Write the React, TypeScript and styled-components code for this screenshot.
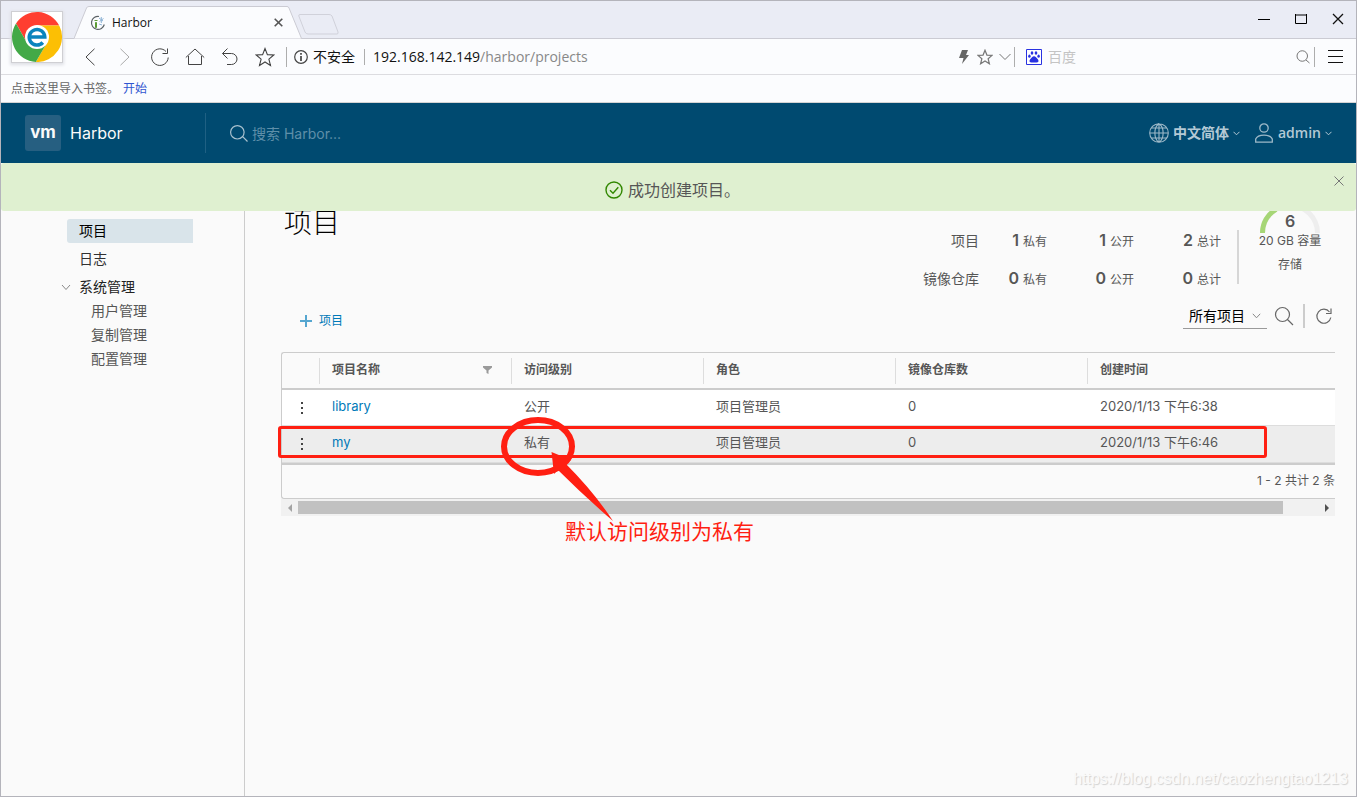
import React from "react";
import styled, { createGlobalStyle } from "styled-components";

const ui = `"Open Sans", "Noto Sans CJK SC", sans-serif`;
const app = `Inter, "Noto Sans CJK SC", sans-serif`;

const GlobalStyle = createGlobalStyle`
  *, *::before, *::after { box-sizing: border-box; }
  body { margin: 0; background: #fafafa; color: #565656; font-family: ${app}; }
  button, input, select { font: inherit; color: inherit; margin: 0; padding: 0; border: 0; background: none; outline: none; }
  button { cursor: pointer; }
  a { text-decoration: none; }
`;

/* ---------- browser frame ---------- */

const Window = styled.div`
  position: relative;
  display: flex;
  flex-direction: column;
  min-height: 100vh;
  border: 1px solid #b4b4bb;
  overflow: hidden;
`;

const TitleBar = styled.div`
  display: flex;
  align-items: flex-end;
  height: 38px;
  padding-left: 73px;
  background: #eaecf5;
  border-bottom: 1px solid #cbcbd3;
  font-family: ${ui};
`;

const BrowserLogo = styled.button`
  position: absolute;
  top: 10px;
  left: 10px;
  z-index: 2;
  background: #fff;
  && { border: 1px solid #cfcfd3; }
  box-shadow: 0 1px 3px 1px #dfe0e6;
  svg { display: block; }
`;

const Tab = styled.div`
  position: relative;
  display: flex;
  align-items: center;
  gap: 6px;
  width: 228px;
  height: 33px;
  margin-bottom: -1px;
  padding: 0 19px 0 16px;
  color: #111;
  font-size: 12px;
`;

const TabShape = styled.svg`
  position: absolute;
  inset: 0;
`;

const Favicon = styled.svg`
  position: relative;
`;

const TabTitle = styled.span`
  position: relative;
  flex: 1;
  line-height: 16px;
`;

const TabClose = styled.button`
  position: relative;
  display: flex;
`;

const NewTab = styled.button`
  display: flex;
  align-self: center;
  margin: 10px 0 0 -4px;
`;

const WindowButtons = styled.div`
  display: flex;
  align-self: stretch;
  margin-left: auto;
`;

const WindowButton = styled.button`
  display: flex;
  align-items: center;
  justify-content: center;
  width: 37px;
  height: 36px;
`;

const NavBar = styled.div`
  display: flex;
  align-items: center;
  height: 36px;
  padding-left: 71px;
  background: #fbfcfe;
  border-bottom: 1px solid #dcdce0;
  font-family: ${ui};
  font-size: 14px;
  line-height: 20px;
`;

const NavButton = styled.button<{ $w?: number }>`
  display: flex;
  flex: none;
  align-items: center;
  justify-content: center;
  width: ${(p) => p.$w ?? 35}px;
  height: 30px;
`;

const BarLine = styled.span<{ $h?: number }>`
  flex: none;
  width: 1px;
  height: ${(p) => p.$h ?? 20}px;
  background: #adadad;
`;

const Security = styled.div`
  display: flex;
  align-items: center;
  gap: 5px;
  margin-left: 4px;
  padding: 0 9px 0 7px;
  border-left: 1px solid #adadad;
  color: #111;
`;

const Address = styled.div`
  flex: 1;
  padding-left: 8px;
  color: #888;
  b { font-weight: 400; color: #111; }
`;

const WebSearch = styled.form`
  display: flex;
  align-items: center;
  width: 299px;
  gap: 6px;
  padding-left: 11px;
  input { flex: 1; min-width: 0; height: 20px; }
  input::placeholder { color: #c4c4c4; opacity: 1; }
`;

const Bookmarks = styled.div`
  display: flex;
  align-items: center;
  gap: 4px;
  height: 28px;
  padding: 0 10px 2px;
  background: #fbfcfe;
  border-bottom: 1px solid #d4d4d4;
  color: #666;
  font-family: ${ui};
  font-size: 12px;
  a { color: #2f55d0; }
`;

/* ---------- application header ---------- */

const Header = styled.header`
  display: flex;
  align-items: center;
  height: 60px;
  padding: 0 24px;
  background: #004a70;
  color: #fafafa;
`;

const Brand = styled.a`
  display: flex;
  align-items: center;
  gap: 9px;
  width: 180px;
  color: #fafafa;
  font-size: 16px;
  line-height: 24px;
`;

const BrandMark = styled.span`
  display: flex;
  align-items: center;
  justify-content: center;
  width: 36px;
  height: 36px;
  padding-bottom: 2px;
  border-radius: 3px;
  background: #265f81;
  font-weight: 700;
  font-size: 17px;
`;

const GlobalSearch = styled.label`
  display: flex;
  flex: 1;
  align-items: center;
  gap: 4px;
  height: 40px;
  padding-left: 24px;
  border-left: 1px solid #1f6083;
  font-size: 14px;
  input { flex: 1; min-width: 0; height: 20px; }
  input::placeholder { color: #5f8fa9; opacity: 1; }
`;

const HeaderMenu = styled.button`
  display: flex;
  align-items: center;
  gap: 4px;
  margin-left: 14px;
  color: #b3c9d5;
  && { font-family: ${ui}; font-size: 14px; font-weight: 600; line-height: 20px; }
`;

/* ---------- page ---------- */

const Page = styled.div`
  position: relative;
  display: flex;
  flex: 1;
`;

const Alert = styled.div`
  position: absolute;
  inset: 0 0 auto 0;
  z-index: 1;
  display: flex;
  align-items: center;
  justify-content: center;
  gap: 5px;
  height: 48px;
  padding: 5px 12px 0 0;
  border-radius: 3px;
  background: #dff0d0;
  color: #565656;
  font-size: 16px;
  line-height: 24px;
`;

const AlertClose = styled.button`
  position: absolute;
  top: 13px;
  right: 12px;
  display: flex;
`;

const Sidebar = styled.nav`
  width: 244px;
  flex: none;
  padding: 56px 51px 0 60px;
  border-right: 1px solid #ccc;
  font-size: 14px;
  line-height: 24px;
`;

const SideLink = styled.a<{ $active?: boolean }>`
  display: block;
  margin: 0 0 4px 6px;
  padding-left: 12px;
  border-radius: 3px 0 0 3px;
  background: ${(p) => (p.$active ? "#d9e4ea" : "none")};
  color: ${(p) => (p.$active ? "#000" : "#313131")};
`;

const SideGroup = styled.button`
  display: flex;
  align-items: center;
  gap: 8px;
  height: 24px;
  color: #222;
`;

const SideChild = styled.a`
  display: block;
  padding-left: 30px;
  color: #565656;
`;

const Main = styled.main`
  flex: 1;
  min-width: 0;
  padding: 40px 21px 24px 36px;
`;

const Top = styled.div`
  display: flex;
  justify-content: space-between;
  height: 95px;
`;

const Title = styled.h1`
  margin: 0;
  padding: 2px 0 0 3px;
  color: #000;
  font-weight: 300;
  font-size: 28px;
  line-height: 36px;
`;

const Summary = styled.div`
  display: flex;
  align-items: flex-end;
`;

const Stats = styled.table`
  border-collapse: collapse;
  margin-right: 16px;
  th, td { height: 38px; padding: 0; text-align: right; vertical-align: middle; line-height: 24px; }
  th { font-weight: 400; font-size: 14px; }
  td { width: 87px; font-size: 12px; }
  td:nth-child(2) { width: 68px; }
  b { margin-right: 4px; font-size: 16px; font-weight: 600; }
`;

const StatsLine = styled.span`
  width: 2px;
  height: 54px;
  margin-bottom: 14px;
  background: #d6d6d6;
`;

const Storage = styled.div`
  display: flex;
  flex-direction: column;
  align-items: center;
  align-self: flex-start;
  width: 102px;
  margin-right: -6px;
  font-size: 12px;
  line-height: 24px;
`;

const Gauge = styled.div`
  display: grid;
  height: 26px;
  justify-items: center;
  align-items: end;
  svg, b { grid-area: 1 / 1; }
  b { padding-bottom: 4px; font-size: 16px; font-weight: 600; line-height: 16px; }
  svg { display: block; }
`;

const Actions = styled.div`
  display: flex;
  align-items: center;
  height: 36px;
  padding-right: 2px;
`;

const AddButton = styled.button`
  display: flex;
  align-items: center;
  gap: 7px;
  && { margin: 9px auto 0 19px; color: #0079b8; font-size: 12px; line-height: 20px; }
`;

const FilterBox = styled.div`
  display: grid;
  align-items: center;
  width: 84px;
  border-bottom: 1px solid #9a9a9a;
  color: #000;
  font-size: 14px;
  select, svg { grid-area: 1 / 1; }
  select { appearance: none; height: 24px; padding-left: 6px; }
  svg { justify-self: end; margin-right: 6px; pointer-events: none; }
`;

const IconButton = styled.button`
  display: flex;
  && { margin-left: 7px; }
`;

const ActionLine = styled.span`
  width: 2px;
  height: 24px;
  margin: 0 3px 0 9px;
  background: #ccc;
`;

const GridWrap = styled.div`
  position: relative;
  margin-top: 18px;
`;

const Grid = styled.div`
  border: 1px solid #ccc;
  border-right: 0;
  border-radius: 3px 0 0 3px;
`;

const DataTable = styled.table`
  width: 100%;
  table-layout: fixed;
  border-collapse: separate;
  border-spacing: 0;
  th, td { text-align: left; padding: 0; }
  th { height: 37px; border-bottom: 2px solid #ccc; font-size: 12px; font-weight: 600; line-height: 24px; }
  td { height: 36px; padding: 0 0 4px 13px; font-size: 13px; line-height: 24px; background: #fff; border-bottom: 1px solid #ddd; }
  tr.hovered td { height: 37px; background: #ededed; }
  td:first-child { padding: 0 0 0 18px; }
  a { color: #0079b8; }
`;

const HeadCell = styled.div`
  display: flex;
  align-items: center;
  justify-content: space-between;
  height: 26px;
  margin-top: 1px;
  padding: 0 19px 2px 12px;
  border-left: 1px solid #ddd;
`;

const RowMenu = styled.button`
  display: flex;
`;

const GridFooter = styled.div`
  height: 35px;
  border-top: 2px solid #ccc;
  text-align: right;
  font-size: 12px;
  line-height: 32px;
`;

const ScrollTrack = styled.div`
  display: flex;
  align-items: center;
  height: 17px;
  background: #f1f1f1;
`;

const ScrollArrow = styled.button`
  display: flex;
  align-items: center;
  justify-content: center;
  width: 17px;
  height: 17px;
`;

const ScrollRail = styled.div`
  flex: 1;
  padding-right: 35px;
`;

const ScrollThumb = styled.div`
  height: 13px;
  background: #c1c1c1;
`;

/* ---------- hand-drawn marks over the grid ---------- */

const MarkBox = styled.div`
  position: absolute;
  top: 74px;
  left: -3px;
  right: 68px;
  height: 32px;
  border: 3px solid #ff1f12;
  border-radius: 3px;
  pointer-events: none;
`;

const MarkArrow = styled.svg`
  position: absolute;
  top: 64px;
  left: 219px;
  pointer-events: none;
`;

const MarkNote = styled.p`
  position: absolute;
  top: 166px;
  left: 284px;
  margin: 0;
  color: #ff1f12;
  font-size: 21px;
  line-height: 28px;
  white-space: nowrap;
`;

const Watermark = styled.div`
  position: absolute;
  right: 8px;
  bottom: 7px;
  color: #fafafa;
  font-family: "Liberation Sans", Arial, sans-serif;
  font-size: 16px;
  line-height: 20px;
  text-shadow: 1px 1px 1px #d0d0d0;
`;

type IconProps = { w: number; h?: number; color?: string; sw?: number; d: string; fill?: string };
const Icon = ({ w, h = w, color = "#444", sw = 1, d, fill = "none" }: IconProps) => (
  <svg width={w} height={h} viewBox={`0 0 ${w} ${h}`} fill={fill} stroke={color} strokeWidth={sw} aria-hidden="true">
    <path d={d} />
  </svg>
);

const star = "M10 1.500L12.400 7.600L18.800 8L13.900 12.200L15.500 18.500L10 15L4.500 18.500L6.100 12.200L1.200 8L7.600 7.600z";

const projects = [
  { name: "library", access: "公开", role: "项目管理员", repos: 0, created: "2020/1/13 下午6:38" },
  { name: "my", access: "私有", role: "项目管理员", repos: 0, created: "2020/1/13 下午6:46", hovered: true },
];

const stats = [
  { label: "项目", values: [1, 1, 2] },
  { label: "镜像仓库", values: [0, 0, 0] },
];
const statNames = ["私有", "公开", "总计"];

export default function App() {
  return (
    <Window>
      <GlobalStyle />
      <BrowserLogo aria-label="浏览器">
        <svg width="50" height="50" viewBox="-25 -25 50 50">
          <path fill="#ff3e30" d="M-21-13.500A25 25 0 0 1 22.200-11.500H0L-10 5.800z" />
          <path fill="#fcbf04" d="M22.200-11.500A25 25 0 0 1-1.200 25L10 5.800 0-11.500z" />
          <path fill="#43a947" d="M-1.200 25A25 25 0 0 1-21-13.500L-10 5.800H10z" />
          <circle r="12" fill="#fff" />
          <path fill="none" stroke="#0a84bd" strokeWidth="3.500" d="M-7.500 0H7.800A7.800 7.800 0 1 0 5.800 5.500" />
        </svg>
      </BrowserLogo>

      <TitleBar>
        <Tab>
          <TabShape width="228" height="33" viewBox="0 0 228 33">
            <path d="M0 32.500L12.500 2Q13 .5 15 .5H213Q214.500.5 215 2L227.500 32.500" fill="#fbfcfe" stroke="#cbcbd3" />
          </TabShape>
          <Favicon width="16" height="16" viewBox="0 0 16 16" fill="none">
            <path d="M9 1.500A6.500 6.500 0 1 0 14.300 9.500" stroke="#5d6468" strokeWidth="1.200" />
            <path d="M5.500 12.500V7.500h1v5zM4.500 5.500h3" stroke="#5b9a35" fill="#5b9a35" />
            <path d="M9 3l4 3M9.500 6.500l4-3M11.300 2v6M9 9l3 1" stroke="#8fb4d6" />
          </Favicon>
          <TabTitle>Harbor</TabTitle>
          <TabClose aria-label="关闭标签">
            <Icon w={9} color="#555" sw={1.6} d="M.7.7l7.600 7.600M8.300.7L.7 8.300" />
          </TabClose>
        </Tab>
        <NewTab aria-label="新标签">
          <Icon w={41} h={21} color="#d0d1da" d="M2 .5H31Q33 .5 34 2L40 18Q40.500 20 39 20H10Q8 20 7 18L.8 2Q.5.500 2 .5z" />
        </NewTab>
        <WindowButtons>
          <WindowButton aria-label="最小化"><Icon w={12} color="#000" d="M0 6.500H12" /></WindowButton>
          <WindowButton aria-label="最大化"><Icon w={12} h={10} color="#000" d="M.5 0V9.500H11.500V0M0 1H12" /></WindowButton>
          <WindowButton aria-label="关闭"><Icon w={12} color="#111" sw={1.300} d="M1 1l10 10M11 1L1 11" /></WindowButton>
        </WindowButtons>
      </TitleBar>

      <NavBar>
        <NavButton aria-label="后退"><Icon w={10} h={18} d="M9.500.8L1 9l8.500 8.200" /></NavButton>
        <NavButton aria-label="前进"><Icon w={10} h={18} color="#aaa" d="M.5.8L9 9L.5 17.200" /></NavButton>
        <NavButton aria-label="刷新"><Icon w={20} d="M18.200 10.500A8.300 8.300 0 1 1 16 4.500M17.500 1.500V6.500H12.500" /></NavButton>
        <NavButton aria-label="主页"><Icon w={20} d="M.8 10.500L10 2l9.200 8.500M3.500 9V17.500H16.500V9" /></NavButton>
        <NavButton aria-label="撤销"><Icon w={18} h={20} d="M1.500 6.500H10.500A5.500 5.500 0 0 1 10.500 17.500H6M6.500 1.500L1.500 6.500L6.500 11.500" /></NavButton>
        <NavButton aria-label="收藏"><Icon w={20} sw={1.100} d={star} /></NavButton>
        <Security>
          <svg width="14" height="14" viewBox="0 0 14 14" fill="none" stroke="#444" strokeWidth="1.200">
            <circle cx="7" cy="7" r="6.300" />
            <path d="M7 6v5M7 3v1.700" strokeWidth="1.700" />
          </svg>
          不安全
        </Security>
        <BarLine $h={16} />
        <Address><b>192.168.142.149</b>/harbor/projects</Address>
        <NavButton $w={20} aria-label="极速模式"><Icon w={10} h={14} color="none" fill="#666" d="M3 0H9L7 5H10L3 14L4.500 8H0z" /></NavButton>
        <NavButton $w={22} aria-label="收藏本页">
          <svg width="16" height="16" viewBox="0 0 20 20" fill="none" stroke="#777" strokeWidth="1.500"><path d={star} /></svg>
        </NavButton>
        <NavButton $w={18} aria-label="展开"><Icon w={12} h={8} color="#777" d="M.5 1l5.500 5.500L11.500 1" /></NavButton>
        <BarLine />
        <WebSearch onSubmit={(e) => e.preventDefault()}>
          <svg width="16" height="16" viewBox="0 0 16 16" fill="#2932e1">
            <path d="M.5.5h15v15H.5z" fill="#fff" stroke="#2932e1" />
            <ellipse cx="6" cy="4" rx="1.300" ry="1.700" />
            <ellipse cx="10" cy="4" rx="1.300" ry="1.700" />
            <ellipse cx="3.400" cy="7.200" rx="1.200" ry="1.600" />
            <ellipse cx="12.600" cy="7.200" rx="1.200" ry="1.600" />
            <path d="M8 7.300C9.500 7.300 10.500 9 12 10.500C13.300 12.500 12 13.800 10 13.500H6C4 13.800 2.700 12.500 4 10.500C5.500 9 6.500 7.300 8 7.300z" />
          </svg>
          <input aria-label="百度" placeholder="百度" />
          <NavButton $w={22} aria-label="搜索"><Icon w={14} color="#777" d="M11.500 6A5.200 5.200 0 1 1 1 6A5.200 5.200 0 0 1 11.500 6M10 10L13.500 13" /></NavButton>
        </WebSearch>
        <BarLine />
        <NavButton $w={41} aria-label="菜单"><Icon w={15} color="#111" d="M0 1.500H15M0 7.500H15M0 13.500H15" /></NavButton>
      </NavBar>

      <Bookmarks>
        <span>点击这里导入书签。</span>
        <a href="#start">开始</a>
      </Bookmarks>

      <Header>
        <Brand href="#home">
          <BrandMark>vm</BrandMark>
          Harbor
        </Brand>
        <GlobalSearch>
          <Icon w={18} color="#a9c2cf" sw={1.200} d="M14 7.500A6.700 6.700 0 1 1 .7 7.500A6.700 6.700 0 0 1 14 7.500M12.200 12.200L17.500 17.500" />
          <input aria-label="搜索" placeholder="搜索 Harbor..." />
        </GlobalSearch>
        <HeaderMenu>
          <Icon w={20} color="#9db9c8" sw={1.100} d="M10 .7A9.300 9.300 0 1 1 10 19.300A9.300 9.300 0 1 1 10 .7V19.300M10 .7C4.500 4 4.500 16 10 19.300C15.500 16 15.500 4 10 .7M.7 10H19.300M2.500 5H17.500M2.500 15H17.500" />
          中文简体
          <Icon w={7} h={5} color="#b3c9d5" d="M.5.800l3 3l3-3" />
        </HeaderMenu>
        <HeaderMenu>
          <Icon w={20} color="#9db9c8" sw={1.300} d="M10 .8A4.200 4.200 0 1 1 10 9.200A4.200 4.200 0 1 1 10 .8M1.700 19.200V16C4 10.800 16 10.800 18.300 16V19.200z" />
          admin
          <Icon w={7} h={5} color="#b3c9d5" d="M.5.800l3 3l3-3" />
        </HeaderMenu>
      </Header>

      <Page>
        <Alert role="status">
          <Icon w={18} color="#318700" sw={1.400} d="M9 1A8 8 0 1 1 9 17A8 8 0 1 1 9 1M5 9.200L8 12.200L13.300 6.300" />
          成功创建项目。
          <AlertClose aria-label="关闭提示"><Icon w={10} color="#777" d="M.5.5l9 9M9.500.5l-9 9" /></AlertClose>
        </Alert>

        <Sidebar>
          <SideLink href="#projects" $active>项目</SideLink>
          <SideLink href="#logs">日志</SideLink>
          <SideGroup aria-expanded="true">
            <Icon w={10} h={7} color="#888" d="M1 1l4 4.500L9 1" />
            系统管理
          </SideGroup>
          <SideChild href="#users">用户管理</SideChild>
          <SideChild href="#replication">复制管理</SideChild>
          <SideChild href="#config">配置管理</SideChild>
        </Sidebar>

        <Main>
          <Top>
            <Title>项目</Title>
            <Summary>
              <Stats>
                <tbody>
                  {stats.map((row) => (
                    <tr key={row.label}>
                      <th scope="row">{row.label}</th>
                      {row.values.map((v, i) => (
                        <td key={statNames[i]}><b>{v}</b>{statNames[i]}</td>
                      ))}
                    </tr>
                  ))}
                </tbody>
              </Stats>
              <StatsLine />
              <Storage>
                <Gauge>
                  <svg width="60" height="30" viewBox="0 0 60 30" fill="none" strokeWidth="5">
                    <path d="M2.500 30A27.500 27.500 0 0 1 57.500 30" stroke="#eee" />
                    <path d="M2.500 30A27.500 27.500 0 0 1 16 6.300" stroke="#a6d676" />
                  </svg>
                  <b>6</b>
                </Gauge>
                <span>20 GB 容量</span>
                <span>存储</span>
              </Storage>
            </Summary>
          </Top>

          <Actions>
            <AddButton>
              <Icon w={12} color="#55a6d0" sw={2} d="M6 0V12M0 6H12" />
              项目
            </AddButton>
            <FilterBox>
              <select aria-label="项目范围" defaultValue="all">
                <option value="all">所有项目</option>
              </select>
              <Icon w={9} h={6} color="#888" d="M.8.8l3.700 4l3.700-4" />
            </FilterBox>
            <IconButton aria-label="查找">
              <Icon w={20} color="#666" sw={1.200} d="M15.500 8.500A7 7 0 1 1 1.500 8.500A7 7 0 0 1 15.500 8.500M13.500 13.500L19 19" />
            </IconButton>
            <ActionLine />
            <IconButton aria-label="重新加载">
              <Icon w={18} color="#666" sw={1.200} d="M15.800 10.500A7 7 0 1 1 14.500 5M16 1.500V6.500H11" />
            </IconButton>
          </Actions>

          <GridWrap>
            <Grid>
              <DataTable>
                <colgroup>
                  <col style={{ width: 37 }} />
                  <col style={{ width: 192 }} />
                  <col style={{ width: 192 }} />
                  <col style={{ width: 192 }} />
                  <col style={{ width: 192 }} />
                  <col />
                </colgroup>
                <thead>
                  <tr>
                    <th aria-label="操作" />
                    <th>
                      <HeadCell>
                        项目名称
                        <svg width="9" height="8" viewBox="0 0 9 8" fill="#9a9a9a"><path d="M0 0H9V1.500L5.500 4.500V8L3.500 7V4.500L0 1.500z" /></svg>
                      </HeadCell>
                    </th>
                    <th><HeadCell>访问级别</HeadCell></th>
                    <th><HeadCell>角色</HeadCell></th>
                    <th><HeadCell>镜像仓库数</HeadCell></th>
                    <th><HeadCell>创建时间</HeadCell></th>
                  </tr>
                </thead>
                <tbody>
                  {projects.map((p) => (
                    <tr key={p.name} className={p.hovered ? "hovered" : undefined}>
                      <td>
                        <RowMenu aria-label={`${p.name} 操作`}>
                          <svg width="4" height="14" viewBox="0 0 4 14" fill="#444"><path d="M1 1h2v2H1zM1 6h2v2H1zM1 11h2v2H1z" /></svg>
                        </RowMenu>
                      </td>
                      <td><a href={`#${p.name}`}>{p.name}</a></td>
                      <td>{p.access}</td>
                      <td>{p.role}</td>
                      <td>{p.repos}</td>
                      <td>{p.created}</td>
                    </tr>
                  ))}
                </tbody>
              </DataTable>
              <GridFooter>1 - 2 共计 2 条</GridFooter>
            </Grid>
            <ScrollTrack>
              <ScrollArrow aria-label="向左滚动"><Icon w={4} h={8} color="none" fill="#a3a3a3" d="M4 0V8L0 4z" /></ScrollArrow>
              <ScrollRail><ScrollThumb /></ScrollRail>
              <ScrollArrow aria-label="向右滚动"><Icon w={4} h={8} color="none" fill="#505050" d="M0 0V8L4 4z" /></ScrollArrow>
            </ScrollTrack>

            <MarkBox />
            <MarkArrow width="114" height="108" viewBox="0 0 114 108">
              <ellipse cx="38" cy="30.500" rx="34" ry="26.500" fill="none" stroke="#ff1f12" strokeWidth="6" />
              <path d="M51.500 36L71 44L66 48Q94 76 113 105Q84 80 58 54L54 58z" fill="#ff1f12" />
            </MarkArrow>
            <MarkNote>默认访问级别为私有</MarkNote>
          </GridWrap>
        </Main>
      </Page>
      <Watermark>https://blog.csdn.net/caozhengtao1213</Watermark>
    </Window>
  );
}
